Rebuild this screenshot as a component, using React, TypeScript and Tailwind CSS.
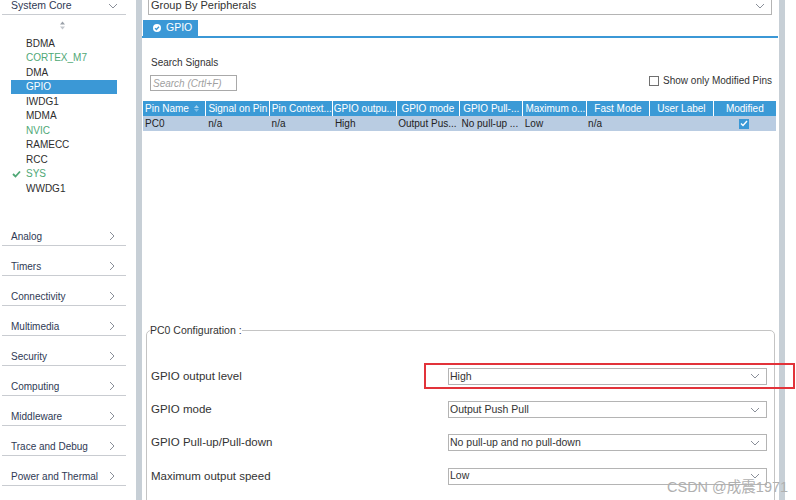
import React from "react";

const PERIPHERALS = [
  { name: "BDMA" },
  { name: "CORTEX_M7", green: true },
  { name: "DMA" },
  { name: "GPIO", selected: true },
  { name: "IWDG1" },
  { name: "MDMA" },
  { name: "NVIC", green: true },
  { name: "RAMECC" },
  { name: "RCC" },
  { name: "SYS", green: true, checked: true },
  { name: "WWDG1" },
];

const CATEGORIES = [
  "Analog",
  "Timers",
  "Connectivity",
  "Multimedia",
  "Security",
  "Computing",
  "Middleware",
  "Trace and Debug",
  "Power and Thermal",
];

const COLUMNS = [
  "Pin Name",
  "Signal on Pin",
  "Pin Context...",
  "GPIO outpu...",
  "GPIO mode",
  "GPIO Pull-...",
  "Maximum o...",
  "Fast Mode",
  "User Label",
  "Modified",
];

const ROW = ["PC0", "n/a", "n/a", "High", "Output Pus...", "No pull-up ...", "Low", "n/a", ""];

const CONFIG = [
  { label: "GPIO output level", value: "High" },
  { label: "GPIO mode", value: "Output Push Pull" },
  { label: "GPIO Pull-up/Pull-down", value: "No pull-up and no pull-down" },
  { label: "Maximum output speed", value: "Low" },
  { label: "", value: "" },
];

function ChevronDown({ className = "" }: { className?: string }) {
  return (
    <svg width="10" height="6" viewBox="0 0 10 6" className={className}>
      <path d="M1 1l4 4 4-4" fill="none" stroke="#8a8f99" strokeWidth="1" />
    </svg>
  );
}

function ChevronRight() {
  return (
    <svg width="6" height="10" viewBox="0 0 6 10">
      <path d="M1 1l4 4-4 4" fill="none" stroke="#8a8f99" strokeWidth="1" />
    </svg>
  );
}

function Sidebar() {
  return (
    <div className="w-[136px] shrink-0 bg-white">
      <div className="mx-[2px] flex h-[15px] w-[124px] items-center justify-between border-b border-[#c9ccd1] pb-[3px] pl-[9px] pr-[8px]">
        <span className="text-[10.5px] text-[#2f3a55]">System Core</span>
        <ChevronDown />
      </div>
      <div className="flex h-[21px] items-center pl-[59px]">
        <svg width="7" height="9" viewBox="0 0 7 9">
          <path d="M3.5 0.5L6 3.5H1z" fill="#9aa0a8" />
          <path d="M3.5 8.5L6 5.5H1z" fill="#c2c6cc" />
        </svg>
      </div>
      <div className="pl-[11px]">
        {PERIPHERALS.map((p) => (
          <div
            key={p.name}
            className={
              "relative flex h-[14.5px] w-[106px] items-center pl-[15px] text-[10px] " +
              (p.selected ? "bg-[#3b98d6] text-white" : p.green ? "text-[#4fa876]" : "text-[#2d2d2d]")
            }
          >
            {p.checked && (
              <svg width="9" height="8" viewBox="0 0 9 8" className="absolute left-[1px] top-[3px]">
                <path d="M1 4l2.5 2.5L8 1.5" fill="none" stroke="#4fa876" strokeWidth="1.8" />
              </svg>
            )}
            {p.name}
          </div>
        ))}
      </div>
      <div className="mt-[20px]">
        {CATEGORIES.map((c) => (
          <div
            key={c}
            className="mx-[2px] flex h-[30px] w-[124px] items-end justify-between border-b border-[#c9ccd1] pb-[2px] pl-[9px] pr-[11px]"
          >
            <span className="text-[10px] leading-[12px] text-[#2f3a55]">{c}</span>
            <span className="pb-[2px]">
              <ChevronRight />
            </span>
          </div>
        ))}
      </div>
    </div>
  );
}

function Select({ value }: { value: string }) {
  return (
    <div className="flex h-[17px] w-[319px] items-center justify-between border border-[#b4b4b4] bg-white pl-[1px] pr-[6px]">
      <span className="text-[10.5px] text-[#333]">{value}</span>
      <ChevronDown />
    </div>
  );
}

function MainPanel() {
  return (
    <div className="relative w-[636px] shrink-0 bg-white">
      <div className="mx-[6px] flex h-[15px] items-start justify-between border-x border-b border-[#b4b4b4] pl-[2px] pr-[6px]">
        <span className="-mt-[1px] text-[11px] leading-[13px] text-[#333]">Group By Peripherals</span>
        <ChevronDown className="mt-[3px]" />
      </div>
      <div className="mt-[5px] flex items-end border-b-2 border-[#3b98d6] pl-[1px]">
        <div className="flex h-[16px] w-[55px] items-center gap-[5px] bg-[#3b98d6] pl-[10px] text-[10.5px] text-white">
          <svg width="8" height="8" viewBox="0 0 8 8">
            <circle cx="4" cy="4" r="4" fill="#fff" />
            <path d="M2 4.1l1.4 1.4L6 2.8" fill="none" stroke="#3b98d6" strokeWidth="1.3" />
          </svg>
          GPIO
        </div>
      </div>
      <div className="mt-[18px] pl-[9px] text-[10px] leading-[13px] text-[#333]">Search Signals</div>
      <div className="mt-[6px] flex items-start justify-between pl-[8px] pr-[6px]">
        <div className="flex h-[16px] w-[87px] items-center border border-[#a9a9a9] pl-[2px] text-[10px] italic text-[#a0a0a0]">
          Search (Crtl+F)
        </div>
        <div className="flex items-center gap-[4px] text-[10px] leading-[12px] text-[#333]">
          <span className="h-[10px] w-[10px] border border-[#707070] bg-white" />
          Show only Modified Pins
        </div>
      </div>
      <div className="mt-[10px] pl-[1px] pr-[2px]">
        <div className="grid grid-cols-10 gap-x-px bg-white">
          {COLUMNS.map((c, i) => (
            <div
              key={c}
              className={
                "flex h-[15px] items-center overflow-hidden whitespace-nowrap bg-[#3b9ad6] text-[10px] text-white " +
                (i === 0 ? "justify-between pl-[2px] pr-[6px]" : i === 1 || i === 2 || i === 6 ? "pl-[2px]" : "justify-center")
              }
            >
              {c}
              {i === 0 && (
                <svg width="5" height="7" viewBox="0 0 5 7">
                  <path d="M2.5 0L5 3H0z" fill="#a9d3ef" />
                  <path d="M2.5 7L5 4H0z" fill="#7fbde6" />
                </svg>
              )}
            </div>
          ))}
        </div>
        <div className="grid h-[15px] grid-cols-10 bg-[#b9cce2]">
          {ROW.map((v, i) => (
            <div key={i} className="flex items-center whitespace-nowrap pl-[2px] text-[10px] text-[#222]">
              {v}
            </div>
          ))}
          <div className="flex items-center justify-center">
            <span className="flex h-[10px] w-[10px] items-center justify-center bg-[#3b98d6]">
              <svg width="8" height="7" viewBox="0 0 8 7">
                <path d="M1 3.5l2 2L7 1" fill="none" stroke="#fff" strokeWidth="1.4" />
              </svg>
            </span>
          </div>
        </div>
      </div>
      <fieldset className="ml-[4px] mr-[3px] mt-[192px] rounded-[5px] border border-[#c4c4c4] pb-[20px] pl-[3px]">
        <legend className="text-[10.5px] text-[#333]">PC0 Configuration :</legend>
        <div className="mt-[29px] flex flex-col gap-[16px] pr-[7px]">
          {CONFIG.map((r, i) => (
            <div key={i} className="flex items-center justify-between pl-[1px]">
              <span className="text-[11.5px] text-[#333]">{r.label}</span>
              <Select value={r.value} />
            </div>
          ))}
        </div>
      </fieldset>
    </div>
  );
}

export default function App() {
  return (
    <div className="relative flex h-[500px] w-[796px] overflow-hidden bg-white font-['Liberation_Sans',Arial,sans-serif]">
      <Sidebar />
      <div className="w-[6px] shrink-0 bg-[#c7cfd6]" />
      <MainPanel />
      <div className="ml-[1px] w-[6px] shrink-0 bg-[#c7cfd6]" />
      <div className="absolute left-[424px] top-[363px] h-[26px] w-[371px] border-2 border-[#e2333a]" />
      <div className="absolute left-[667px] top-[477px] font-['Liberation_Sans','Noto_Sans_CJK_SC',sans-serif] text-[14.5px] text-[#b0b0b0]">
        CSDN @成震1971
      </div>
    </div>
  );
}
